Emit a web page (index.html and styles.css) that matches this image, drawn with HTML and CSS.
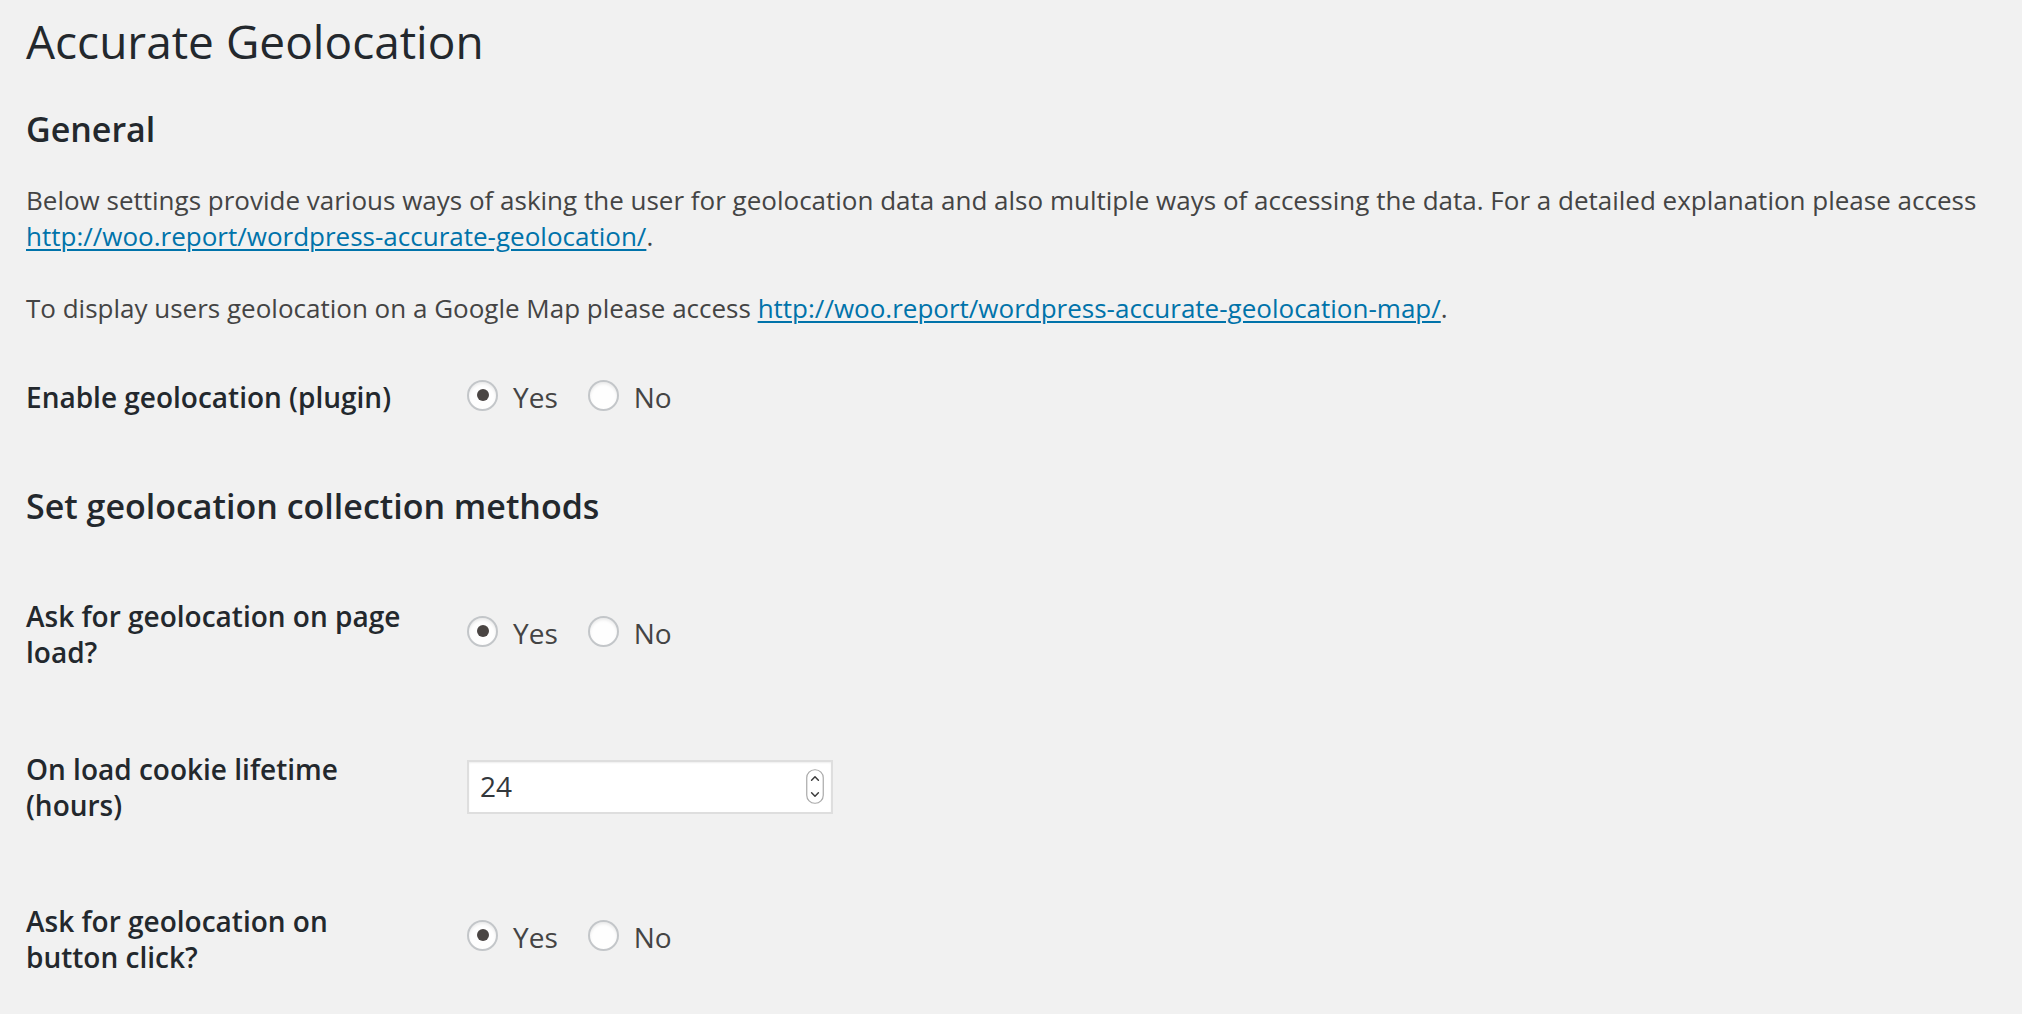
FILE: index.html
```html
<!DOCTYPE html>
<html lang="en">
<head>
<meta charset="utf-8">
<title>Accurate Geolocation</title>
<link rel="stylesheet" href="styles.css">
</head>
<body>
<div class="wrap">
  <h1 class="page-title">Accurate Geolocation</h1>
  <h2 class="section-title section-general">General</h2>
  <p class="intro intro-first">Below settings provide various ways of asking the user for geolocation data and also multiple ways of accessing the data. For a detailed explanation please access <a href="#">http://woo.report/wordpress-accurate-geolocation/</a>.</p>
  <p class="intro intro-second">To display users geolocation on a Google Map please access <a href="#">http://woo.report/wordpress-accurate-geolocation-map/</a>.</p>

  <div class="row row-enable">
    <div class="row-label">Enable geolocation (plugin)</div>
    <div class="row-control control-inline">
      <label class="radio"><span class="radio-dot checked"></span><span class="radio-text">Yes</span></label>
      <label class="radio"><span class="radio-dot"></span><span class="radio-text">No</span></label>
    </div>
  </div>

  <h2 class="section-title section-methods">Set geolocation collection methods</h2>

  <div class="row row-pageload">
    <div class="row-label">Ask for geolocation on page load?</div>
    <div class="row-control control-pageload">
      <label class="radio"><span class="radio-dot checked"></span><span class="radio-text">Yes</span></label>
      <label class="radio"><span class="radio-dot"></span><span class="radio-text">No</span></label>
    </div>
  </div>

  <div class="row row-cookie">
    <div class="row-label">On load cookie lifetime (hours)</div>
    <div class="row-control control-cookie">
      <div class="number-input">
        <span class="number-value">24</span>
        <svg class="spinner" width="18" height="35" viewBox="0 0 18 35" aria-hidden="true">
          <rect x="0.75" y="0.75" width="16.5" height="33.5" rx="8" ry="8" fill="#fff" stroke="#a9a9a9" stroke-width="1.2"/>
          <path d="M5.6 11.2 L9 7.8 L12.4 11.2" fill="none" stroke="#3c3c3c" stroke-width="1.5" stroke-linecap="round" stroke-linejoin="round"/>
          <path d="M5.6 23.8 L9 27.2 L12.4 23.8" fill="none" stroke="#3c3c3c" stroke-width="1.5" stroke-linecap="round" stroke-linejoin="round"/>
        </svg>
      </div>
    </div>
  </div>

  <div class="row row-button">
    <div class="row-label">Ask for geolocation on button click?</div>
    <div class="row-control control-button">
      <label class="radio"><span class="radio-dot checked"></span><span class="radio-text">Yes</span></label>
      <label class="radio"><span class="radio-dot"></span><span class="radio-text">No</span></label>
    </div>
  </div>
</div>
</body>
</html>
```

FILE: styles.css
```css
html, body {
  margin: 0;
  padding: 0;
  background: #f1f1f1;
}

body {
  font-family: "Open Sans", "Liberation Sans", sans-serif;
  color: #444;
}

.wrap {
  padding: 12px 30px 0 26px;
}

.page-title {
  margin: 0;
  font-size: 46px;
  line-height: 58px;
  font-weight: 400;
  color: #23282d;
}

.section-title {
  margin: 0;
  font-size: 34px;
  line-height: 44px;
  font-weight: 600;
  color: #23282d;
}

.section-general {
  margin-top: 37px;
}

.section-methods {
  margin-top: 69px;
}

.intro {
  margin: 0;
  font-size: 26px;
  line-height: 36px;
  color: #444;
}

.intro a {
  color: #0073aa;
  text-decoration: underline;
  text-decoration-thickness: 2px;
  text-underline-offset: 3px;
}

.intro-first {
  margin-top: 31px;
}

.intro-second {
  margin-top: 36px;
}

.row {
  display: flex;
  align-items: flex-start;
}

.row-enable {
  margin-top: 53px;
}

.row-pageload {
  margin-top: 70px;
}

.row-cookie {
  margin-top: 81px;
}

.row-button {
  margin-top: 80px;
}

.row-label {
  width: 400px;
  flex: 0 0 400px;
  padding-right: 41px;
  font-size: 28px;
  line-height: 36px;
  font-weight: 600;
  color: #23282d;
}

.row-control {
  display: flex;
  align-items: center;
  font-size: 28px;
  line-height: 36px;
  color: #444;
}

.control-pageload {
  padding-top: 17px;
}

.control-cookie {
  padding-top: 9px;
}

.control-button {
  padding-top: 16px;
}

.radio {
  display: flex;
  align-items: center;
  margin-right: 30px;
}

.radio-dot {
  box-sizing: border-box;
  width: 31px;
  height: 31px;
  border-radius: 50%;
  border: 2px solid #c3c6c9;
  background: #fefefe;
  box-shadow: inset 0 2px 3px rgba(0, 0, 0, 0.08);
  margin-right: 15px;
  margin-bottom: 4px;
  display: flex;
  align-items: center;
  justify-content: center;
}

.radio-dot.checked::after {
  content: "";
  width: 12px;
  height: 12px;
  border-radius: 50%;
  background: #4a4543;
}

.number-input {
  box-sizing: border-box;
  width: 366px;
  height: 54px;
  border: 2px solid #dedede;
  background: #fff;
  box-shadow: inset 0 1px 2px rgba(0, 0, 0, 0.07);
  display: flex;
  align-items: center;
  padding: 0 7px 2px 11px;
}

.number-value {
  flex: 1;
  font-size: 28px;
  line-height: 36px;
  color: #32373c;
}

.spinner {
  display: block;
  margin-top: 1px;
}
```
